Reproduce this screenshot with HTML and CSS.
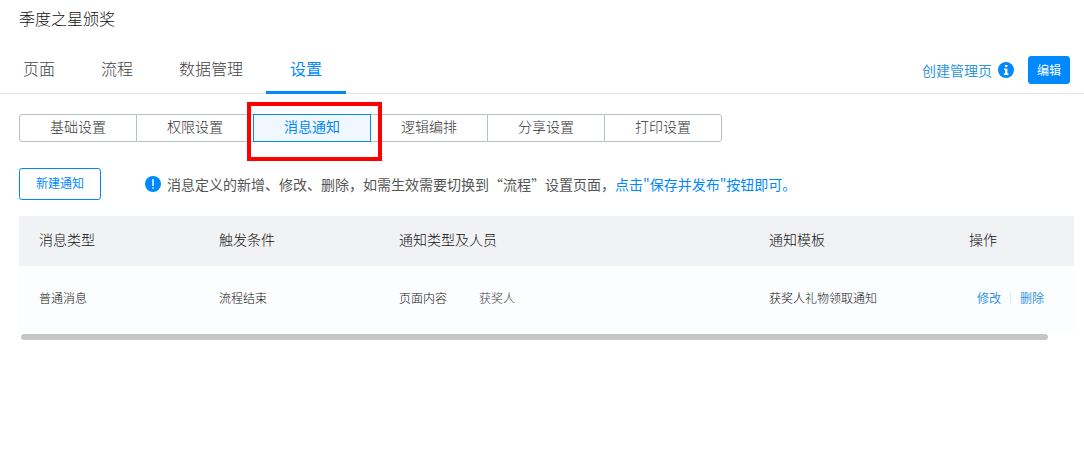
FILE: index.html
```html
<!DOCTYPE html>
<html lang="zh-CN">
<head>
    <meta charset="UTF-8">
    <meta name="viewport" content="width=device-width, initial-scale=1.0">
    <title>季度之星颁奖</title>
    <link rel="stylesheet" href="styles.css">
</head>
<body>
    <header>
        <h1>季度之星颁奖</h1>
        <div class="top-bar">
            <nav class="tabs">
                <a href="#" class="tab">页面</a>
                <a href="#" class="tab">流程</a>
                <a href="#" class="tab">数据管理</a>
                <a href="#" class="tab active">设置</a>
            </nav>
            <div class="top-actions">
                <a href="#" class="create-link">创建管理页</a>
                <svg class="icon" viewBox="0 0 16 16">
                    <circle cx="8" cy="8" r="8" fill="#0089ff"/>
                    <path d="M7 3h2.400v2H7zM6 6.500h3.400v5h1.100V13H5.800v-1.500H7V8H6z" fill="#fff"/>
                </svg>
                <button type="button" class="btn btn-primary">编辑</button>
            </div>
        </div>
    </header>
    <main>
        <div class="segments">
            <button type="button" class="segment">基础设置</button>
            <button type="button" class="segment">权限设置</button>
            <button type="button" class="segment active">消息通知</button>
            <button type="button" class="segment">逻辑编排</button>
            <button type="button" class="segment">分享设置</button>
            <button type="button" class="segment">打印设置</button>
        </div>

        <div class="toolbar">
            <button type="button" class="btn btn-outline">新建通知</button>
            <p class="tip">
                <svg class="icon" viewBox="0 0 16 16">
                    <circle cx="8" cy="8" r="8" fill="#0089ff"/>
                    <path d="M7.300 3h1.400v7H7.300zM7.300 11.200h1.400v1.600H7.300z" fill="#fff"/>
                </svg>
                <span>消息定义的新增、修改、删除，如需生效需要切换到“流程”设置页面，<span class="tip-link">点击"保存并发布"按钮即可。</span></span>
            </p>
        </div>

        <table>
            <thead>
                <tr>
                    <th class="col-type">消息类型</th>
                    <th class="col-type">触发条件</th>
                    <th>通知类型及人员</th>
                    <th class="col-template">通知模板</th>
                    <th class="col-action">操作</th>
                </tr>
            </thead>
            <tbody>
                <tr>
                    <td>普通消息</td>
                    <td>流程结束</td>
                    <td><span class="notice-type">页面内容</span><span class="person">获奖人</span></td>
                    <td>获奖人礼物领取通知</td>
                    <td>
                        <div class="row-actions">
                            <a href="#">修改</a>
                            <a href="#">删除</a>
                        </div>
                    </td>
                </tr>
            </tbody>
        </table>
        <div class="scroll-track">
            <div class="scroll-thumb"></div>
        </div>
    </main>
</body>
</html>
```
FILE: styles.css
```css
* {
    box-sizing: border-box;
}
body {
    margin: 0;
    font-family: "Noto Sans CJK SC", sans-serif;
    font-size: 14px;
    font-weight: 300;
    color: #111;
    background: #fff;
}
a {
    color: #3296dc;
    font-weight: 400;
    text-decoration: none;
}
button {
    font-family: inherit;
    font-weight: inherit;
    cursor: pointer;
}
h1 {
    margin: 0;
    padding: 6px 19px 0;
    font-size: 16px;
    font-weight: 300;
    line-height: 24px;
}
.top-bar {
    display: flex;
    justify-content: space-between;
    margin-top: 16px;
    padding-right: 14px;
    border-bottom: 1px solid #e4e4e4;
}
.tabs {
    display: flex;
    margin-bottom: -1px;
}
.tab {
    padding: 0 23px;
    font-size: 16px;
    font-weight: 300;
    line-height: 45px;
    color: #444;
    border-bottom: 3px solid transparent;
}
.tab.active {
    padding: 0 24px;
    color: #0089ff;
    font-weight: 400;
    border-color: #0089ff;
}
.top-actions {
    display: flex;
    align-items: center;
}
.icon {
    width: 16px;
    height: 16px;
    flex: none;
}
.create-link {
    margin-right: 6px;
}
.btn {
    border: 1px solid #0089ff;
    border-radius: 3px;
    font-size: 12px;
    font-weight: 400;
}
.btn-primary {
    height: 28px;
    margin-left: 14px;
    padding: 0 8px;
    color: #fff;
    background: #0089ff;
}
.btn-outline {
    height: 32px;
    padding: 0 16px 4px;
    color: #0089ff;
    background: #fff;
}
main {
    padding: 20px 10px 0 19px;
}
.segments {
    display: flex;
}
.segment {
    position: relative;
    height: 28px;
    padding: 0 30px 4px;
    font-size: 14px;
    line-height: 22px;
    color: #333;
    background: #fff;
    border: 1px solid #b8bfcb;
}
.segment + .segment {
    margin-left: -1px;
}
.segment:first-child {
    border-radius: 3px 0 0 3px;
}
.segment:last-child {
    border-radius: 0 3px 3px 0;
}
.segment.active {
    z-index: 1;
    color: #0089ff;
    font-weight: 400;
    background: #f0f7ff;
    border-color: #0089ff;
}
/* red frame around the current section */
.segment.active::after {
    content: "";
    position: absolute;
    top: -13px;
    right: -12px;
    bottom: -20px;
    left: -7px;
    border: 4px solid #f00;
}
.toolbar {
    display: flex;
    align-items: center;
    margin: 26px 0 16px;
}
.tip {
    display: flex;
    align-items: center;
    gap: 6px;
    margin: 0 0 0 44px;
    color: #555;
    font-weight: 400;
}
.tip-link {
    color: #0089ff;
}
table {
    width: 100%;
    table-layout: fixed;
    border-collapse: collapse;
}
th, td {
    padding: 0 0 4px 20px;
    text-align: left;
    font-weight: 300;
}
th {
    height: 50px;
    background: #f1f2f4;
}
td {
    height: 66px;
    font-size: 12px;
    background: #fcfdff;
}
.col-type {
    width: 180px;
}
.col-template {
    width: 200px;
}
.col-action {
    width: 125px;
}
.notice-type {
    display: inline-block;
    width: 80px;
}
.person {
    color: #444;
}
.row-actions {
    display: flex;
    padding: 2px 0 0 8px;
    line-height: 12px;
}
.row-actions a + a {
    margin-left: 9px;
    padding-left: 9px;
    border-left: 1px solid #e8eaee;
}
.scroll-track {
    padding: 2px 26px 0 2px;
}
.scroll-thumb {
    height: 6px;
    border-radius: 3px;
    background: #c5c6c8;
}
```
